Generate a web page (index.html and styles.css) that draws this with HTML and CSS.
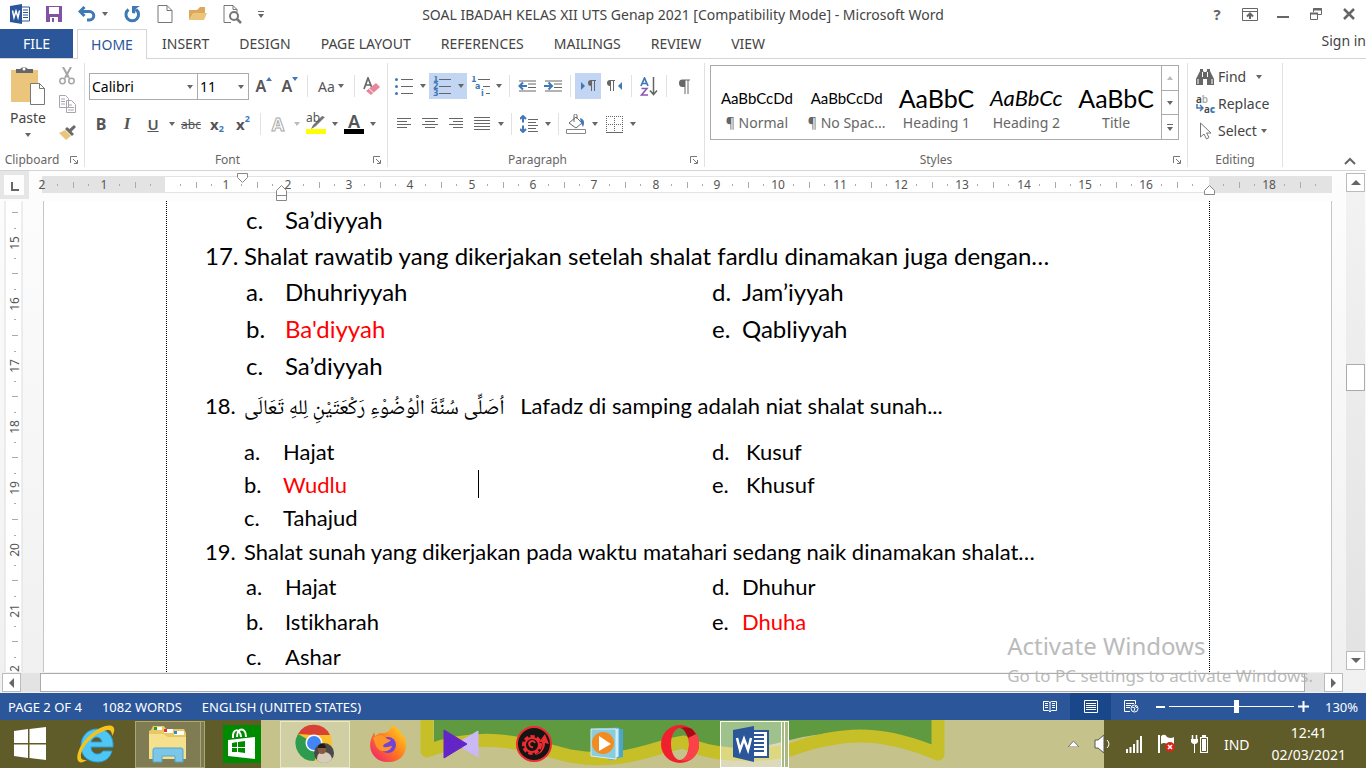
FILE: index.html
```html
<!DOCTYPE html>
<html lang="en">

<head>
    <meta charset="UTF-8">
    <meta name="viewport" content="width=device-width, initial-scale=1.0">
    <title>SOAL IBADAH KELAS XII UTS Genap 2021 - Microsoft Word</title>
    <link rel="stylesheet" href="styles.css">
</head>

<body>
    <header class="titlebar">
        <div class="quick">
            <svg class="word-logo" width="20" height="20" viewBox="0 0 20 20"><path d="M11 3h8.500v14H11z" fill="#fff" stroke="#2b579a"/><path d="M13 6h5M13 8.500h5M13 11h5M13 13.500h5" stroke="#2b579a"/><path d="M0 2l12-2v20L0 18z" fill="#2b579a"/><path d="M2.500 6.500l1.500 7 2-6.500 2 6.500 1.500-7" fill="none" stroke="#fff" stroke-width="1.500"/></svg>
            <button class="qbtn" aria-label="Save"><svg width="16" height="16"><path d="M0 0h16v16H0z" fill="#8352a5"/><path d="M3 1h10v7H3zM4 11h8v5H4z" fill="#fff"/><path d="M6 12h2v4H6z" fill="#8352a5"/></svg></button>
            <button class="qbtn" aria-label="Undo"><svg width="18" height="16"><path d="M6.500 1L2 5.500 6.500 10M2 5.500h9.500a4 4 0 010 8.500H9" fill="none" stroke="#3f78b5" stroke-width="3"/></svg><span class="caret"></span></button>
            <button class="qbtn" aria-label="Redo"><svg width="17" height="17"><path d="M4.500 3.500a6.300 6.300 0 107.500 0" fill="none" stroke="#3f78b5" stroke-width="3"/><path d="M8 0h8l-4 2.500-1 5L8 7z" fill="#3f78b5"/></svg></button>
            <button class="qbtn" aria-label="New"><svg width="16" height="18"><path d="M1 .5h9l5 5v12H1zM10 .5v5h5" fill="#fff" stroke="#777"/></svg></button>
            <button class="qbtn" aria-label="Open"><svg width="18" height="16"><path d="M0 14V4h8l3-3h5v7H4z" fill="#dca85b"/><path d="M0 14l4-7h14l-3 7z" fill="#ecc57c"/></svg></button>
            <button class="qbtn" aria-label="Print Preview"><svg width="19" height="19"><path d="M8 17.500H1V.5h9l4 4v3M10 .5v4h4" fill="none" stroke="#777"/><circle cx="11" cy="11" r="4" fill="#fff" stroke="#777" stroke-width="2"/><path d="M14 14l4 4" stroke="#777" stroke-width="2.500"/></svg></button>
            <button class="qbtn more" aria-label="Customize"><span class="bar"></span><span class="caret"></span></button>
        </div>
        <h1 class="title">SOAL IBADAH KELAS XII UTS Genap 2021 [Compatibility Mode] - Microsoft Word</h1>
        <div class="window-buttons">
            <button aria-label="Help" class="help">?</button>
            <button aria-label="Ribbon Display"><svg width="16" height="13"><path d="M.5 .5h15v12H.5zM.5 3.500h15" fill="none" stroke="#666"/><path d="M8 11V5.500M5 8.500l3-3 3 3" fill="none" stroke="#666" stroke-width="2"/></svg></button>
            <button aria-label="Minimize"><svg width="12" height="12"><path d="M0 9h12" stroke="#666" stroke-width="2"/></svg></button>
            <button aria-label="Restore"><svg width="12" height="12"><path d="M3.500 4V.5h8v6H8" fill="none" stroke="#666"/><path d="M3 1.500h9M0 5.500h8" stroke="#666" stroke-width="2"/><path d="M.5 5.500h7v6h-7z" fill="none" stroke="#666"/></svg></button>
            <button aria-label="Close"><svg width="12" height="12"><path d="M1 1l10 10M11 1L1 11" stroke="#666" stroke-width="2.500"/></svg></button>
        </div>
    </header>

    <nav class="tabs">
        <a class="tab file" href="#">FILE</a>
        <a class="tab active" href="#">HOME</a>
        <a class="tab" href="#">INSERT</a>
        <a class="tab" href="#">DESIGN</a>
        <a class="tab" href="#">PAGE LAYOUT</a>
        <a class="tab" href="#">REFERENCES</a>
        <a class="tab" href="#">MAILINGS</a>
        <a class="tab" href="#">REVIEW</a>
        <a class="tab" href="#">VIEW</a>
        <a class="signin" href="#">Sign in</a>
    </nav>

    <div class="ribbon">
        <section class="group clipboard">
            <div class="clip-body">
                <button class="paste">
                    <svg width="36" height="40"><path d="M1 4h27v32H1z" fill="#ecc57c"/><path d="M6 7V3h4a4.500 3 0 018 0h5v4z" fill="#666"/><circle cx="14" cy="3" r="1.500" fill="#fff"/><path d="M20.500 17.500h9l5 5v16h-14zM29.500 17.500v5h5" fill="#fff" stroke="#777"/></svg>
                    <span>Paste</span><span class="caret"></span>
                </button>
                <div class="clip-side">
                    <button class="btn small" aria-label="Cut"><svg width="16" height="18"><path d="M4 0l6 11M12 0L6 11" stroke="#a5a5a5" stroke-width="2"/><circle cx="3.500" cy="14" r="2.700" fill="none" stroke="#a5a5a5" stroke-width="1.500"/><circle cx="12.500" cy="14" r="2.700" fill="none" stroke="#a5a5a5" stroke-width="1.500"/></svg></button>
                    <button class="btn small" aria-label="Copy"><svg width="17" height="18"><path d="M.5.500h6l3 3v9h-9zM7.500 5.500h5l4 4v8h-9z" fill="#fff" stroke="#aaa4b0"/><path d="M2 4h4M2 6.500h4M2 9h4M9 10h4M9 12.500h6M9 15h6" stroke="#aaa4b0"/></svg></button>
                    <button class="btn small" aria-label="Format Painter"><svg width="17" height="15"><path d="M0 8l6-3 6 6-5 4z" fill="#ecc57c"/><path d="M6 4l7 7 2-2-2.500-2.500L17 2l-2-2-4.500 4L8 2z" fill="#6a6a6a"/></svg></button>
                </div>
            </div>
            <div class="caption"><span>Clipboard</span><button class="launcher" aria-label="Clipboard options"><svg width="8" height="8"><path d="M.5 7V.5H7M3 3l4 4M7.500 4v3.500H4" fill="none" stroke="#777"/></svg></button></div>
        </section>

        <section class="group font">
            <div class="row">
                <label class="combo name"><select aria-label="Font"><option>Calibri</option></select><span class="caret"></span></label>
                <label class="combo size"><select aria-label="Font size"><option>11</option></select><span class="caret"></span></label>
                <button class="btn letter grow" aria-label="Grow font">A<span class="tri up"></span></button>
                <button class="btn letter shrink" aria-label="Shrink font">A<span class="tri down"></span></button>
                <span class="sep"></span>
                <button class="btn split case" aria-label="Change case"><span>Aa</span><span class="caret"></span></button>
                <span class="sep"></span>
                <button class="btn" aria-label="Clear formatting"><svg width="18" height="18"><path d="M1 12L5 1l4 10M2.500 8h5" fill="none" stroke="#666" stroke-width="1.700"/><path d="M3 14l10-8 4 4-9 8z" fill="#e8879b"/><path d="M6 11.500l4.500 4.500" stroke="#fff"/></svg></button>
            </div>
            <div class="row">
                <button class="btn bold">B</button>
                <button class="btn italic">I</button>
                <button class="btn split"><span class="icon underline">U</span><span class="caret"></span></button>
                <button class="btn strike">abc</button>
                <button class="btn script">x<sub>2</sub></button>
                <button class="btn script">x<sup>2</sup></button>
                <span class="sep"></span>
                <button class="btn split faded"><span class="icon effect">A</span><span class="caret"></span></button>
                <button class="btn split" aria-label="Highlight"><span class="icon mark"><span>ab</span><svg width="20" height="20"><path d="M19 3l-9 9-3 2-2 1 2-4 9-9z" fill="#777"/><path d="M0 15h20v5H0z" fill="#ff0"/></svg></span><span class="caret"></span></button>
                <button class="btn split" aria-label="Font color"><span class="icon fcolor">A</span><span class="caret"></span></button>
            </div>
            <div class="caption"><span>Font</span><button class="launcher" aria-label="Font options"><svg width="8" height="8"><path d="M.5 7V.5H7M3 3l4 4M7.500 4v3.500H4" fill="none" stroke="#777"/></svg></button></div>
        </section>

        <section class="group paragraph">
            <div class="row">
                <button class="btn split" aria-label="Bullets"><span class="icon"><svg width="18" height="18"><path d="M6 2.500h12M6 9.500h12M6 16.500h12" stroke="#666"/><g fill="#3f78b5"><circle cx="1.500" cy="2.500" r="1.500"/><circle cx="1.500" cy="9.500" r="1.500"/><circle cx="1.500" cy="16.500" r="1.500"/></g></svg></span><span class="caret"></span></button>
                <button class="btn split on" aria-label="Numbering"><span class="icon"><svg width="18" height="20"><path d="M6 3.500h12M6 10.500h12M6 17.500h12" stroke="#666"/><g class="tiny"><text x="0" y="6">1</text><text x="0" y="13">2</text><text x="0" y="20">3</text></g></svg></span><span class="caret"></span></button>
                <button class="btn split" aria-label="Multilevel list"><span class="icon"><svg width="19" height="20"><path d="M7 3.500h12M12 10.500h7M15 17.500h4" stroke="#666"/><g class="tiny"><text x="0" y="6">1</text><text x="4" y="13">a</text><text x="10" y="20">i</text></g></svg></span><span class="caret"></span></button>
                <span class="sep"></span>
                <button class="btn" aria-label="Decrease indent"><svg width="18" height="12"><path d="M1 1h17M10 4h8M10 7.500h8M1 11h17" stroke="#666"/><path d="M5 2.500L1.500 6 5 9.500M1.500 6H9" fill="none" stroke="#3f78b5" stroke-width="2"/></svg></button>
                <button class="btn" aria-label="Increase indent"><svg width="18" height="12"><path d="M1 1h17M10 4h8M10 7.500h8M1 11h17" stroke="#666"/><path d="M4.500 2.500L8 6 4.500 9.500M8 6H0" fill="none" stroke="#3f78b5" stroke-width="2"/></svg></button>
                <span class="sep"></span>
                <button class="btn on" aria-label="Left to right"><svg width="15" height="12"><path d="M0 2l4 4-4 4z" fill="#3f78b5"/><path d="M10 0h5v1h-1v10h-1V1h-2v10h-1V6a3 3 0 010-6z" fill="#666"/></svg></button>
                <button class="btn" aria-label="Right to left"><svg width="15" height="12"><path d="M15 2l-4 4 4 4z" fill="#3f78b5"/><path d="M3 0h5v1H7v10H6V1H4v10H3V6a3 3 0 010-6z" fill="#666"/></svg></button>
                <span class="sep"></span>
                <button class="btn" aria-label="Sort"><svg width="18" height="19"><path d="M1 9l3.500-8L8 9M2 6.500h5" fill="none" stroke="#3f78b5" stroke-width="1.700"/><path d="M1.500 11.500H7L1.500 18H8" fill="none" stroke="#8a56b0" stroke-width="1.500"/><path d="M13.500 0v17M10 13.500l3.500 4 3.500-4" fill="none" stroke="#666" stroke-width="1.500"/></svg></button>
                <span class="sep"></span>
                <button class="btn" aria-label="Show marks"><svg width="12" height="15"><path d="M4.500.500H12V1.500h-1.500V15h-1V1.500h-2V15h-1V8H5A3.700 3.700 0 014.500.500z" fill="#666"/></svg></button>
            </div>
            <div class="row">
                <button class="btn" aria-label="Align left"><svg width="14" height="12"><path d="M0 .5h14M0 3.500h10M0 6.500h14M0 9.500h10" stroke="#666"/></svg></button>
                <button class="btn" aria-label="Center"><svg width="16" height="12"><path d="M0 .5h16M3 3.500h10M0 6.500h16M3 9.500h10" stroke="#666"/></svg></button>
                <button class="btn" aria-label="Align right"><svg width="14" height="12"><path d="M0 .5h14M4 3.500h10M0 6.500h14M4 9.500h10" stroke="#666"/></svg></button>
                <button class="btn split" aria-label="Justify"><span class="icon"><svg width="16" height="14"><path d="M0 .5h16M0 3.500h16M0 6.500h16M0 9.500h16M0 12.500h16" stroke="#666"/></svg></span><span class="caret"></span></button>
                <span class="sep"></span>
                <button class="btn split" aria-label="Line spacing"><span class="icon"><svg width="18" height="18"><path d="M8 4.500h10M8 7.500h8M8 10.500h10M8 13.500h8M8 16.500h10" stroke="#666"/><path d="M3 1.500v6M0 4l3-3 3 3M3 10.500v6M0 14l3 3 3-3" fill="none" stroke="#3f78b5" stroke-width="2"/></svg></span><span class="caret"></span></button>
                <span class="sep"></span>
                <button class="btn split" aria-label="Shading"><span class="icon"><svg width="20" height="20"><path d="M3 9l7-6 6 6-6 5zM8 8V1.500a1.500 1.500 0 013 0V5" fill="#fff" stroke="#666"/><path d="M14 4c4 1 5 4 3 9l-2-4z" fill="#3f78b5"/><path d="M.5 15.500h19v4H.5z" fill="#fff" stroke="#888"/></svg></span><span class="caret"></span></button>
                <button class="btn split" aria-label="Borders"><span class="icon"><svg width="17" height="17"><path d="M.5 0v16M16.500 0v16M8.500 0v16M0 .5h17M0 8.500h17" stroke="#666" stroke-dasharray="1 1"/><path d="M0 16.500h17" stroke="#666"/></svg></span><span class="caret"></span></button>
            </div>
            <div class="caption"><span>Paragraph</span><button class="launcher" aria-label="Paragraph options"><svg width="8" height="8"><path d="M.5 7V.5H7M3 3l4 4M7.500 4v3.500H4" fill="none" stroke="#777"/></svg></button></div>
        </section>

        <section class="group styles">
            <div class="gallery">
                <button class="style"><span class="sample">AaBbCcDd</span><span>¶ Normal</span></button>
                <button class="style"><span class="sample">AaBbCcDd</span><span>¶ No Spac...</span></button>
                <button class="style"><span class="sample big">AaBbC</span><span>Heading 1</span></button>
                <button class="style"><span class="sample medium">AaBbCc</span><span>Heading 2</span></button>
                <button class="style"><span class="sample big">AaBbC</span><span>Title</span></button>
                <div class="gallery-nav">
                    <button aria-label="Up"><span class="tri up grey"></span></button>
                    <button aria-label="Down"><span class="caret"></span></button>
                    <button aria-label="More" class="more"><span class="bar"></span><span class="caret"></span></button>
                </div>
            </div>
            <div class="caption"><span>Styles</span><button class="launcher" aria-label="Styles options"><svg width="8" height="8"><path d="M.5 7V.5H7M3 3l4 4M7.500 4v3.500H4" fill="none" stroke="#777"/></svg></button></div>
        </section>

        <section class="group editing">
            <button class="edit"><svg width="18" height="16"><path d="M4 2V0h3v2l1 1h2l1-1V0h3v2l4 8v6h-7v-6H7v6H0v-6z" fill="#666"/><path d="M6.500 3v5M11.500 3v5M2 10v5M16 10v5" stroke="#fff"/></svg>Find <span class="caret"></span></button>
            <button class="edit"><span class="swap"><span>a<i>b</i></span><span class="to"><svg width="8" height="8"><path d="M1 0v4h5M4 1l3 3-3 3" fill="none" stroke="#3f78b5" stroke-width="1.500"/></svg>a<b>c</b></span></span>Replace</button>
            <button class="edit"><svg width="18" height="18"><path d="M4.500 1v14l3.500-3 2.500 5 2.500-1.500-2.500-4.500H15z" fill="#fff" stroke="#777"/></svg>Select<span class="caret near"></span></button>
            <div class="caption"><span>Editing</span></div>
        </section>
        <button class="collapse" aria-label="Collapse ribbon"><svg width="12" height="8"><path d="M1 7l5-5 5 5" fill="none" stroke="#666" stroke-width="2"/></svg></button>
    </div>

    <main class="workspace">
        <div class="editor">
            <div class="ruler-row">
                <button class="corner" aria-label="Tab selector"><svg width="20" height="20"><path d="M0 0h20v20H0z" fill="#fdfdfd"/><path d="M8 7v8h7" fill="none" stroke="#666" stroke-width="2"/></svg></button>
                <svg class="hruler" id="hruler"></svg>
            </div>
            <div class="canvas">
                <svg class="vruler" id="vruler"></svg>
                <article class="page">
                    <div class="text-area">
                        <section class="block wide">
                            <div class="options"><span>c.</span><span>Sa’diyyah</span></div>
                        </section>
                        <section class="block wide">
                            <div class="question"><span>17.</span><span>Shalat rawatib yang dikerjakan setelah shalat fardlu dinamakan juga dengan…</span></div>
                            <div class="options"><span>a.</span><span>Dhuhriyyah</span><span>d.</span><span>Jam’iyyah</span></div>
                            <div class="options"><span>b.</span><span class="answer">Ba'diyyah</span><span>e.</span><span>Qabliyyah</span></div>
                            <div class="options"><span>c.</span><span>Sa’diyyah</span></div>
                        </section>
                        <section class="block tight">
                            <div class="question tall"><span>18.</span><span><bdi class="arabic" lang="ar" dir="rtl">اُصَلِّى سُنَّةَ الْوُضُوْءِ رَكْعَتَيْنِ لِلهِ تَعَالَى</bdi> Lafadz di samping adalah niat shalat sunah...</span></div>
                            <div class="options"><span>a.</span><span>Hajat</span><span>d.</span><span>Kusuf</span></div>
                            <div class="options"><span>b.</span><span class="answer">Wudlu</span><span>e.</span><span>Khusuf</span><i class="text-cursor"></i></div>
                            <div class="options"><span>c.</span><span>Tahajud</span></div>
                        </section>
                        <section class="block last">
                            <div class="question"><span>19.</span><span>Shalat sunah yang dikerjakan pada waktu matahari sedang naik dinamakan shalat…</span></div>
                            <div class="options"><span>a.</span><span>Hajat</span><span>d.</span><span>Dhuhur</span></div>
                            <div class="options"><span>b.</span><span>Istikharah</span><span>e.</span><span class="answer">Dhuha</span></div>
                            <div class="options"><span>c.</span><span>Ashar</span></div>
                        </section>
                    </div>
                </article>
            </div>
            <div class="hscroll">
                <button aria-label="Scroll left"><span class="arrow left"></span></button>
                <div class="htrack"><div class="hthumb"></div></div>
                <button aria-label="Scroll right"><span class="arrow right"></span></button>
            </div>
        </div>
        <div class="vscroll">
            <button aria-label="Scroll up"><span class="arrow top"></span></button>
            <div class="vtrack"><div class="vthumb"></div></div>
            <button aria-label="Scroll down"><span class="arrow bottom"></span></button>
        </div>
        <div class="watermark">
            <p class="wm-title">Activate Windows</p>
            <p>Go to PC settings to activate Windows.</p>
        </div>
    </main>

    <footer class="status">
        <span>PAGE 2 OF 4</span>
        <span>1082 WORDS</span>
        <span>ENGLISH (UNITED STATES)</span>
        <div class="views">
            <button aria-label="Read mode"><svg width="14" height="13"><path d="M.5 1.500h5l1.500 1 1.500-1h5v9h-5L7 12l-1.500-1.500h-5zM7 2v10M2 3.500h3M2 5.500h3M2 7.500h3M9 3.500h3M9 5.500h3M9 7.500h3" fill="none" stroke="#fff"/></svg></button>
            <button class="current" aria-label="Print layout"><svg width="14" height="13"><path d="M.5.500h13v12H.5zM2 3.500h10M2 5.500h10M2 7.500h10M2 9.500h10" fill="none" stroke="#fff"/></svg></button>
            <button aria-label="Web layout"><svg width="15" height="13"><path d="M6 11.500H.5V.5h11V4M2 3.500h8M2 5.500h5M2 7.500h4" fill="none" stroke="#fff"/><circle cx="10.500" cy="8.500" r="3.500" fill="#2b579a" stroke="#fff"/><path d="M8 7l3 1-1 3M11 6l2 2" stroke="#fff" fill="none"/></svg></button>
        </div>
        <div class="zoom">
            <button aria-label="Zoom out"><svg width="9" height="10"><path d="M0 5h9" stroke="#fff" stroke-width="2"/></svg></button>
            <input type="range" min="0" max="100" value="54" aria-label="Zoom">
            <button aria-label="Zoom in"><svg width="11" height="11"><path d="M0 5.500h11M5.500 0v11" stroke="#fff" stroke-width="2"/></svg></button>
            <button class="percent">130%</button>
        </div>
    </footer>

    <footer class="taskbar">
        <svg class="wallpaper" viewBox="0 0 1366 48" preserveAspectRatio="none">
            <path d="M0 0h1366v48H0z" fill="#c5c28c"/>
            <path d="M434 0H932V28Q850 4 790 20Q740 34 700 25Q682 14 655 26Q600 42 540 24Q480 10 434 24z" fill="#5f9a41"/>
            <path d="M427 0v31C490 8 535 28 570 36C625 46 655 26 684 22C710 36 755 38 790 30C850 8 890 14 938 34V0" fill="none" stroke="#c6bf28" stroke-width="13" stroke-linejoin="round"/>
            <path d="M0 0h261v48H0zM1104 0h262v48h-262z" fill="#5f5c29"/>
        </svg>
        <button class="task start" aria-label="Start"><svg width="32" height="34"><path d="M0 4l14-2v14H0zM15.500 2L32 0v16H15.500zM0 17.500h14V31L0 29zM15.500 17.500H32V33l-16.500-2z" fill="#fff"/></svg></button>
        <button class="task" aria-label="Internet Explorer"><svg width="38" height="38" viewBox="0 0 38 38"><path d="M20 4c10 0 17 7 16 18H14c0 8 9 9 12 4h9c-2 7-7 11-14 11C10 37 4 30 4 21S10 4 20 4zm-6 13h11c-1-6-9-7-11 0z" fill="#4fc6f3" stroke="#2a9edb" fill-rule="evenodd"/><path d="M10 35c-9 6-12 0-8-10C8 11 26-2 35 1c4 2 2 7 0 10 0-6-3-7-8-5C14 10 3 25 4 32c0 3 3 3 6 3z" fill="#f6c21c"/></svg></button>
        <button class="task" aria-label="File Explorer"><span class="frame stack1"><svg width="40" height="40"><path d="M3 6l2-4h11l2 3h18l2 4v26H1V7z" fill="#e8c765"/><path d="M6 3h8v3H6zM16 5h9v4h-9zM26 7h10v4H26z" fill="#fff"/><path d="M6 3h3v3H6z" fill="#2a9a38"/><path d="M16 5h3v3h-3z" fill="#d33"/><path d="M26 7h3v3h-3z" fill="#268ed0"/><path d="M1 10h14l5 3h18v22H1z" fill="#f5e08d"/><path d="M5 38V26q0-2 2-2h26q2 0 2 2v12h-8v-6H14v6z" fill="#7cc6e7" stroke="#53a5d0"/></svg></span></button>
        <button class="task" aria-label="Store"><svg width="38" height="38"><path d="M0 0h38v38H0z" fill="#008a00"/><path d="M5 15l27-3v22L5 31z" fill="#fff"/><path d="M10 13c-1-10 7-10 8-1M14 12c0-10 9-10 9 0" fill="none" stroke="#fff" stroke-width="2"/><path d="M9 18l5-1v5H9zM15 17l7-1v6h-7zM9 23h5v4H9zM15 23h7v5l-7-1z" fill="#008a00"/></svg></button>
        <button class="task" aria-label="Chrome"><span class="frame light"><svg width="40" height="40"><circle cx="19" cy="19" r="18" fill="#fbc02d"/><path d="M19 11L3 10a18 18 0 0132 1z" fill="#d94135"/><path d="M19 19L3 10a18 18 0 0016 27l8-14z" fill="#2d9c4e"/><circle cx="19" cy="19" r="8.500" fill="#fff"/><circle cx="19" cy="19" r="7" fill="#4285f4"/><circle cx="29" cy="29" r="10" fill="#4a4a48"/><path d="M22 36c0-7 3-8 7-8s7 2 8 7c-4 5-11 5-15 1z" fill="#d8cdbb"/><circle cx="27" cy="26" r="4" fill="#8a5b42"/><path d="M23 24c0-6 8-6 8 0z" fill="#201b19"/></svg></span></button>
        <button class="task" aria-label="Firefox"><svg width="38" height="38"><defs><linearGradient id="fox" x1="1" y1="0" x2="0" y2="1"><stop offset="0" stop-color="#ffe226"/><stop offset=".5" stop-color="#ff7a1c"/><stop offset="1" stop-color="#f0147c"/></linearGradient></defs><path d="M24 0c2 3 6 4 8 7l1 5 1-3c8 14 0 28-14 28C6 38-3 25 3 12l2-5 1 4 5-3c4 1 7-1 9-2 1-3 2-4 4-6z" fill="url(#fox)"/><circle cx="19" cy="20" r="8" fill="#7542d6"/><path d="M4 13c6-5 12-2 14 1l4 1c-2 3-7 3-8 6 2 3 6 0 9 0-2 7-13 7-16 0z" fill="#ff9528"/></svg></button>
        <button class="task" aria-label="KMPlayer"><svg width="36" height="30"><path d="M35 2v26L13 15z" fill="#cbb9f5" stroke="#cbb9f5" stroke-linejoin="round"/><path d="M1 1l23 14L1 29z" fill="#6324c8" stroke="#6324c8" stroke-linejoin="round"/></svg></button>
        <button class="task" aria-label="Driver Booster"><svg width="38" height="38"><circle cx="19" cy="19" r="17" fill="#151515" stroke="#ee2b30" stroke-width="2"/><circle cx="17" cy="20" r="8" fill="none" stroke="#ee2b30" stroke-width="4" stroke-dasharray="4 2"/><circle cx="17" cy="20" r="7" fill="#151515" stroke="#ee2b30" stroke-width="2"/><path d="M20 30c7-3 8-8 7-13h-3l6-8 4 10-4-1c0 7-5 12-10 12z" fill="#ee2b30"/><path d="M20 18a3 3 0 10-2 4" fill="none" stroke="#ee2b30" stroke-width="2"/></svg></button>
        <button class="task" aria-label="Media Player"><svg width="34" height="34"><path d="M8 3l25-1v28l-14 3z" fill="#4ba6cc"/><path d="M5 2l24-1v29l-9 3z" fill="#d0edf5" stroke="#5aaed0"/><path d="M1 2h25v30L1 29z" fill="#8acbdc" stroke="#d6f0f5"/><circle cx="13" cy="16" r="11" fill="#f28b20"/><path d="M9 9l12 8-12 7z" fill="#fff"/></svg></button>
        <button class="task" aria-label="Opera"><svg width="38" height="38"><path d="M19 0a19 19 0 100 38 19 19 0 000-38zm0 3c5 0 9 7 9 16s-4 16-9 16-9-7-9-16 4-16 9-16z" fill="#f0202f" fill-rule="evenodd"/><path d="M19 3c3-1 8-1 12 1a19 19 0 010 30c-4 2-9 2-12 1 5 0 9-7 9-16S24 3 19 3z" fill="#fa4248"/><path d="M19 3c3-1 8-1 12 1l4 5-8 4C25 7 22 3 19 3z" fill="#a70a16"/></svg></button>
        <button class="task" aria-label="Word"><span class="frame active-task stack2"><svg width="38" height="38"><path d="M19 6h17v26H19z" fill="#fff" stroke="#2b579a" stroke-width="2"/><path d="M22 10h10M22 14h10M22 18h10M22 22h10M22 26h10" stroke="#2b579a" stroke-width="2"/><path d="M1 5l21-4v36L1 32z" fill="#2b579a"/><path d="M5 13l3 12 4-11 4 11 3-12" fill="none" stroke="#fff" stroke-width="2.500"/></svg></span></button>
        <div class="tray">
            <svg width="11" height="6"><path d="M0 6l5.500-6L11 6z" fill="#fff" stroke="#777"/></svg>
            <svg width="17" height="20"><path d="M1 6h3l6-5v18l-6-5H1z" fill="#fff" stroke="#555"/><path d="M13 6q4 4 0 8" fill="none" stroke="#fff"/></svg>
            <svg width="16" height="17"><path d="M0 13h2v4H0zM3.500 11h2v6h-2zM7 8h2v9H7zM10.500 4h2v13h-2zM14 0h2v17h-2z" fill="#fff"/></svg>
            <svg width="19" height="20"><path d="M2 1v18" stroke="#fff" stroke-width="2"/><path d="M4 2q4-3 6 1 4 2 7 0v8q-4 2-7-1-3-2-6 0z" fill="#fff"/><circle cx="13" cy="13" r="5" fill="#d9261c"/><path d="M11 11l4 4M15 11l-4 4" stroke="#fff" stroke-width="1.500"/></svg>
            <svg width="18" height="20"><path d="M1.500 1v4M5.500 1v4" stroke="#fff" stroke-width="1.500"/><path d="M0 5h7v3q-1 2-3 2v9H3v-9Q1 10 0 8z" fill="#fff"/><path d="M11 1h4v2h2v16H9V3h2z" fill="#fff"/><path d="M10.500 4.500h5v13h-5z" fill="none" stroke="#5f5c29"/></svg>
            <span class="lang">IND</span>
            <div class="clock"><span>12:41</span><span>02/03/2021</span></div>
        </div>
    </footer>

    <script>
        var NS = "http://www.w3.org/2000/svg"
        var cm = 184 / 3 // one centimetre at 130% zoom

        function add(parent, tag, attrs, text) {
            var el = document.createElementNS(NS, tag)
            for (var key in attrs) {
                el.setAttribute(key, attrs[key])
            }
            if (text !== undefined) el.textContent = text
            parent.appendChild(el)
        }

        function horizontalRuler() {
            var svg = document.getElementById("hruler")
            add(svg, "rect", { x: 1, y: 5, width: 1290, height: 17, fill: "#e3e3e3" })
            add(svg, "rect", { x: 124, y: 6, width: 1044, height: 15, fill: "#fff" })
            for (var i = -2; i <= 18; i++) {
                var x = Math.round(124 + i * cm)
                if (i !== 0 && i !== 17) {
                    add(svg, "text", { x: x, y: 18, "text-anchor": "middle" }, Math.abs(i))
                }
                if (x + 46 > 1291) continue
                add(svg, "path", { d: `M${x + 15}.5 13v2M${x + 31}.5 11v6M${x + 46}.5 13v2`, stroke: "#aaa" })
            }
            add(svg, "path", { d: "M196.5 2.500h10v4l-5 5-5-5z", fill: "#fff", stroke: "#888" })
            add(svg, "path", { d: "M235.5 29.500v-10l5-5 5 5v10zM235.5 24.500h10", fill: "#fff", stroke: "#888" })
            add(svg, "path", { d: "M1163.5 23.500v-4l5-5 5 5v4z", fill: "#fff", stroke: "#888" })
        }

        function verticalRuler() {
            var svg = document.getElementById("vruler")
            add(svg, "rect", { x: 5, y: -1, width: 17, height: "110%", fill: "#fff", stroke: "#ddd" })
            for (var n = 15; n <= 22; n++) {
                var y = Math.round(42 + (n - 15) * cm)
                add(svg, "text", { "text-anchor": "middle", transform: `translate(19 ${y}) rotate(-90)` }, n)
                add(svg, "path", { d: `M14 ${y - 15}.5h2M12 ${y - 31}.5h6M14 ${y + 15}.5h2`, stroke: "#aaa" })
            }
        }

        horizontalRuler()
        verticalRuler()
    </script>
</body>

</html>
```

FILE: styles.css
```css
* {
    box-sizing: border-box;
}

body {
    margin: 0;
    height: 100vh;
    display: flex;
    flex-direction: column;
    overflow: hidden;
    background: #fff;
    color: #444;
    font-family: "Noto Sans", sans-serif;
    font-size: 14px;
}

button {
    padding: 0;
    border: 0;
    background: none;
    color: inherit;
    font: inherit;
}

a {
    color: inherit;
    text-decoration: none;
}

svg {
    display: block;
    flex: none;
}

/* small triangles */
.caret {
    flex: none;
    width: 0;
    border: 3px solid transparent;
    border-top: 4px solid #666;
    border-bottom: 0;
}

.tri {
    border: 3px solid transparent;
}

.tri.up {
    border-top: 0;
    border-bottom: 4px solid #3f78b5;
}

.tri.down {
    border-bottom: 0;
    border-top: 4px solid #3f78b5;
}

.tri.grey {
    border-bottom-color: #bbb;
}

.more {
    display: flex;
    flex-direction: column;
    align-items: center;
    justify-content: center;
    gap: 2px;
}

.bar {
    width: 6px;
    height: 1px;
    background: #666;
}

/* title bar */
.titlebar {
    display: grid;
    grid-template-columns: 1fr auto 1fr;
    align-items: center;
    height: 28px;
}

.quick {
    display: flex;
    align-items: center;
    gap: 16px;
    padding-left: 10px;
}

.qbtn {
    display: flex;
    align-items: center;
    gap: 6px;
}

.qbtn.more {
    gap: 2px;
}

.title {
    margin: 0;
    font-size: 14px;
    font-weight: normal;
    white-space: nowrap;
}

.window-buttons {
    display: flex;
    justify-content: flex-end;
    gap: 1px;
    padding-right: 1px;
}

.window-buttons button {
    width: 32px;
    display: flex;
    justify-content: center;
    align-items: center;
}

.window-buttons .help {
    color: #666;
    font-size: 15px;
    font-weight: bold;
}

/* tabs */
.tabs {
    display: flex;
    height: 31px;
    padding-top: 1px;
    border-bottom: 1px solid #d5d5d5;
}

.tab {
    display: flex;
    align-items: center;
    padding: 0 15px;
    white-space: nowrap;
}

.tab.file {
    justify-content: center;
    width: 73px;
    margin-right: 4px;
    background: #2b579a;
    color: #fff;
}

.tab.active {
    justify-content: center;
    width: 70px;
    margin-bottom: -1px;
    padding: 0;
    border: 1px solid #d5d5d5;
    border-bottom: 0;
    background: #fff;
    color: #2b579a;
}

.signin {
    margin-left: auto;
    padding-top: 2px;
}

/* ribbon */
.ribbon {
    display: flex;
    height: 112px;
    padding: 4px 0 3px;
    border-bottom: 1px solid #d5d5d5;
}

.group {
    display: flex;
    flex-direction: column;
    border-right: 1px solid #e1e1e1;
}

.font,
.paragraph {
    gap: 12px;
    padding: 10px 0 0 3px;
}

.clipboard {
    width: 85px;
}

.font {
    width: 303px;
}

.paragraph {
    width: 317px;
}

.styles {
    width: 483px;
}

.editing {
    width: 95px;
}

.caption {
    display: flex;
    align-items: center;
    height: 14px;
    margin-top: auto;
    color: #666;
    font-size: 12px;
    line-height: 14px;
}

.caption span {
    flex: 1;
    text-align: center;
}

.launcher {
    width: 20px;
    display: flex;
    justify-content: center;
}

.clip-body {
    display: flex;
}

.paste {
    display: flex;
    flex-direction: column;
    align-items: center;
    width: 56px;
    padding-top: 3px;
    gap: 2px;
}

.paste span + .caret {
    margin-top: 4px;
}

.clip-side {
    display: flex;
    flex-direction: column;
    gap: 2px;
}

.row {
    display: flex;
    height: 26px;
}

.btn {
    width: 26px;
    height: 26px;
    display: flex;
    justify-content: center;
    align-items: center;
    color: #555;
}

.btn.small {
    width: 22px;
}

.btn.split {
    width: 38px;
    justify-content: flex-start;
    gap: 3px;
}

.btn.on {
    background: #c2d5f2;
}

.icon {
    width: 26px;
    display: flex;
    justify-content: center;
}

.sep {
    width: 1px;
    height: 22px;
    margin: 2px 4px;
    background: #e1e1e1;
}

.combo {
    position: relative;
    display: flex;
    align-items: center;
    height: 27px;
    border: 1px solid #ababab;
}

.combo.name {
    width: 109px;
    margin-left: 1px;
}

.combo.size {
    width: 52px;
    margin: 0 2px 0 -1px;
}

.combo select {
    width: 100%;
    padding: 0 2px;
    border: 0;
    appearance: none;
    background: #fff;
    color: #000;
    font: 14px "Noto Sans", sans-serif;
}

.combo .caret {
    position: absolute;
    right: 4px;
}

.letter {
    align-items: center;
    font-size: 16px;
    font-weight: 600;
}

.letter .tri {
    align-self: flex-start;
    margin-top: 4px;
}

.case.split {
    justify-content: center;
}

.bold {
    font-size: 16px;
    font-weight: bold;
}

.italic {
    font: italic bold 17px "Liberation Serif", serif;
}

.underline {
    font-size: 15px;
    font-weight: 600;
    text-decoration: underline;
}

.strike {
    font-size: 12px;
    text-decoration: line-through;
}

.script {
    font-size: 15px;
    font-weight: bold;
}

.script sub,
.script sup {
    color: #3f78b5;
    font-size: 9px;
}

.script sub {
    align-self: flex-end;
    margin-bottom: 2px;
}

.script sup {
    align-self: flex-start;
    margin-top: 1px;
}

.effect {
    color: #fff;
    font-size: 18px;
    font-weight: bold;
    -webkit-text-stroke: 1px #aaa;
}

.faded .caret {
    border-top-color: #bbb;
}

.mark {
    position: relative;
}

.mark span {
    position: absolute;
    top: -4px;
    left: 3px;
    font-size: 12px;
    line-height: 16px;
}

.fcolor {
    width: 20px;
    height: 20px;
    margin: 0 3px;
    border-bottom: 5px solid #000;
    font-size: 18px;
    font-weight: 600;
    line-height: 14px;
}

.tiny {
    fill: #3f78b5;
    font: bold 8px "DejaVu Sans", sans-serif;
}

.gallery {
    display: flex;
    height: 75px;
    margin: 2px 8px 0 5px;
    padding-left: 1px;
    border: 1px solid #ababab;
}

.style {
    flex: 1;
    min-width: 0;
    display: flex;
    flex-direction: column;
    align-items: center;
    justify-content: flex-end;
    padding-bottom: 7px;
    color: #666;
    white-space: nowrap;
}

.sample {
    height: 30px;
    color: #000;
    font: 15px/30px "Lato", sans-serif;
}

.sample.big {
    font-size: 25px;
}

.sample.medium {
    font-size: 22px;
    font-style: italic;
}

.gallery-nav {
    display: flex;
    flex-direction: column;
    width: 17px;
    border-left: 1px solid #ababab;
}

.gallery-nav button {
    flex: 1;
    display: flex;
    justify-content: center;
    align-items: center;
}

.gallery-nav button + button {
    border-top: 1px solid #ababab;
}

.edit {
    display: flex;
    align-items: center;
    gap: 4px;
    height: 27px;
    padding-left: 8px;
}

.edit .caret {
    margin-left: 6px;
}

.edit .near {
    margin-left: 0;
}

.swap {
    width: 18px;
    font-size: 10px;
    font-weight: 600;
    line-height: 10px;
    text-align: left;
    white-space: nowrap;
}

.swap span {
    display: flex;
}

.swap i {
    color: #aaa;
    font-style: normal;
}

.swap b {
    color: #3f78b5;
}

.collapse {
    align-self: flex-end;
    margin: 0 10px 2px auto;
}

/* document */
.workspace {
    position: relative;
    flex: 1;
    min-height: 0;
    display: flex;
    background: linear-gradient(#fdfdfd, #f0f0f0);
}

.editor {
    flex: 1;
    min-width: 0;
    display: flex;
    flex-direction: column;
}

.ruler-row {
    display: flex;
    height: 30px;
}

.corner {
    width: 29px;
    height: 28px;
    padding: 4px;
    margin-right: 12px;
    background: #e6e6e6;
}

.hruler {
    flex: 1;
    height: 30px;
    overflow: visible;
}

.hruler text,
.vruler text {
    fill: #555;
    font: 12px "Noto Sans", sans-serif;
}

.canvas {
    flex: 1;
    min-height: 0;
    display: flex;
    overflow: hidden;
}

.vruler {
    width: 43px;
    height: 100%;
}

.page {
    flex: 1;
    margin-right: 11px;
    padding: 0 121px 0 122px;
    border: solid #c6c6c6;
    border-width: 0 1px;
    background: #fff;
}

.text-area {
    height: 100%;
    padding-left: 38px;
    border: dotted #000;
    border-width: 0 1px;
    color: #000;
    font: 22px "Lato", sans-serif;
    font-variant-ligatures: none;
    white-space: nowrap;
}

.block {
    line-height: 35px;
}

.wide {
    font-size: 24px;
}

.wide .options {
    line-height: 37px;
}

.tight {
    line-height: 33px;
}

.question {
    display: grid;
    grid-template-columns: 39px 1fr;
}

.question.tall {
    line-height: 44px;
    margin-bottom: 7px;
}

.options {
    position: relative;
    display: grid;
    grid-template-columns: 39px 427px 30px 1fr;
    padding-left: 41px;
}

.tight .options {
    grid-template-columns: 39px 429px 34px 1fr;
    padding-left: 39px;
}

.answer {
    color: #f00;
}

.arabic {
    margin-right: 10px;
    font-family: "Traditional Arabic", "Noto Naskh Arabic", "DejaVu Sans", sans-serif;
    font-size: 21px;
    line-height: 20px;
}

.text-cursor {
    position: absolute;
    top: 2px;
    left: 273px;
    width: 1px;
    height: 28px;
    background: #000;
}

/* scroll bars */
.hscroll {
    display: flex;
    height: 21px;
    padding: 1px 0 1px 2px;
}

.hscroll button,
.vscroll button {
    flex: none;
    display: flex;
    justify-content: center;
    align-items: center;
    width: 19px;
    height: 19px;
    border: 1px solid #bbb;
    background: #fff;
}

.htrack {
    flex: 1;
    padding: 0 19px;
    background: #e3e3e3;
}

.hthumb {
    height: 19px;
    border: 1px solid #ababab;
    background: #fff;
}

.vscroll {
    display: flex;
    flex-direction: column;
    width: 23px;
    padding: 2px 1px 23px 3px;
}

.vtrack {
    flex: 1;
    padding-top: 172px;
    background: linear-gradient(#f2f2f2, #e3e3e3);
}

.vthumb {
    height: 27px;
    border: 1px solid #ababab;
    background: #fff;
}

.arrow {
    border: 5px solid transparent;
}

.arrow.left {
    border-left: 0;
    border-right-color: #666;
}

.arrow.right {
    border-right: 0;
    border-left-color: #666;
}

.arrow.top {
    border-top: 0;
    border-bottom-color: #666;
}

.arrow.bottom {
    border-bottom: 0;
    border-top-color: #666;
}

.watermark {
    position: absolute;
    right: 53px;
    bottom: 4px;
    color: #b4b4b4;
    font-size: 17px;
    opacity: 0.9;
}

.watermark p {
    margin: 0;
    line-height: 26px;
}

.watermark .wm-title {
    font-size: 24px;
    line-height: 34px;
}

/* status bar */
.status {
    display: flex;
    align-items: center;
    gap: 20px;
    height: 27px;
    padding: 0 8px;
    background: #2b579a;
    color: #fff;
    font-size: 13px;
}

.views {
    display: flex;
    height: 27px;
    margin-left: auto;
}

.views button {
    display: flex;
    justify-content: center;
    align-items: center;
    width: 41px;
}

.views .current {
    background: #19478a;
}

.zoom {
    display: flex;
    align-items: center;
    gap: 4px;
    margin-left: -16px;
}

.zoom input {
    appearance: none;
    width: 125px;
    height: 15px;
    margin: 0;
    background: linear-gradient(#fff, #fff) center / 100% 1px no-repeat;
}

.zoom input::-webkit-slider-thumb {
    appearance: none;
    width: 5px;
    height: 13px;
    background: #fff;
}

.percent {
    width: 33px;
    margin-left: 12px;
}

/* taskbar */
.taskbar {
    position: relative;
    display: flex;
    height: 48px;
    color: #fff;
}

.wallpaper {
    position: absolute;
    width: 100%;
    height: 100%;
}

.task {
    position: relative;
    display: flex;
    justify-content: center;
    align-items: center;
    width: 73px;
}

.task.start {
    width: 59px;
}

.frame {
    display: flex;
    justify-content: center;
    align-items: center;
    width: 70px;
    height: 47px;
    border: 1px solid #a9a67c;
    background: rgba(255, 255, 255, 0.2);
}

.frame.light {
    border-color: #e8e7cc;
}

.frame.stack1 {
    width: 66px;
    margin-right: 2px;
    box-shadow: 4px 0 0 -1px #7d7a50, 4px 0 0 #a9a67c;
}

.frame.active-task {
    width: 62px;
    border-color: #fff;
    background: rgba(255, 255, 255, 0.4);
}

.frame.stack2 {
    margin-right: 4px;
    box-shadow: 3px 0 0 -1px #a9b985, 3px 0 0 #fff, 7px 0 0 -1px #a9b985, 7px 0 0 #fff;
}

.tray {
    position: relative;
    display: flex;
    align-items: center;
    gap: 15px;
    margin-left: auto;
    padding-right: 20px;
}

.lang {
    margin: 0 7px 0 0;
}

.clock {
    display: flex;
    flex-direction: column;
    align-items: center;
    line-height: 22px;
}
```
